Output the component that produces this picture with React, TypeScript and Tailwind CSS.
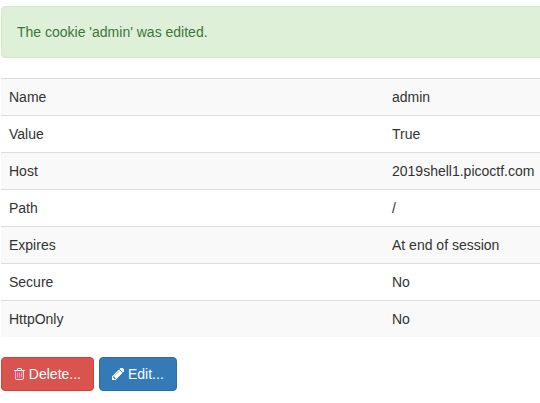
const rows = [
  ["Name", "admin"],
  ["Value", "True"],
  ["Host", "2019shell1.picoctf.com"],
  ["Path", "/"],
  ["Expires", "At end of session"],
  ["Secure", "No"],
  ["HttpOnly", "No"],
];

function TrashIcon() {
  return (
    <svg className="h-[12px] w-[11px]" viewBox="0 0 11 12" fill="none" stroke="white">
      <path d="M0 2.500h11M3.500 2V1q0-.5.5-.5h3q.5 0 .5.5v1M1.500 2.500v8q0 1 1 1h6q1 0 1-1v-8" />
      <path stroke="#ff9cf4" d="M1.500 3v7.500M3.500 4.500v5M5.500 4.500v5M7.500 4.500v5" />
    </svg>
  );
}

function PencilIcon() {
  return (
    <svg className="h-[12px] w-[12px]" viewBox="0 96 1440 1440" fill="currentColor">
      <path d="M363 1408l91-91-235-235-91 91v107h128v128h107zm523-928q0-22-22-22-10 0-17 7l-542 542q-7 7-7 17 0 22 22 22 10 0 17-7l542-542q7-7 7-17zm-54-192l416 416-832 832H0v-416zm683 96q0 53-37 90l-166 166-416-416 166-165q36-38 90-38 53 0 91 38l235 234q37 39 37 91z" />
    </svg>
  );
}

export default function App() {
  return (
    <div className="h-[403px] w-[540px] overflow-hidden bg-white pl-px pt-[6px] font-['Liberation_Sans',Arial,sans-serif] text-[14px] leading-5 text-[#333]">
      <div className="mb-5 h-[52px] w-[560px] rounded border border-[#d6e9c6] bg-[#dff0d8] p-[15px] text-[#3c763d]">
        The cookie 'admin' was edited.
      </div>
      <div className="mb-5">
        {rows.map(([name, value]) => (
          <div key={name} className="flex h-[37px] border-t border-[#ddd] p-2 odd:bg-[#f9f9f9]">
            <span className="w-[383px] shrink-0">{name}</span>
            <span>{value}</span>
          </div>
        ))}
      </div>
      <div className="flex gap-[5px]">
        <button className="flex h-[34px] w-[93px] items-center gap-1 rounded border border-[#d43f3a] bg-[#d9534f] px-3 text-white">
          <TrashIcon />
          Delete...
        </button>
        <button className="flex h-[34px] w-[78px] items-center gap-1 rounded border border-[#2e6da4] bg-[#337ab7] px-3 text-white">
          <PencilIcon />
          Edit...
        </button>
      </div>
    </div>
  );
}
